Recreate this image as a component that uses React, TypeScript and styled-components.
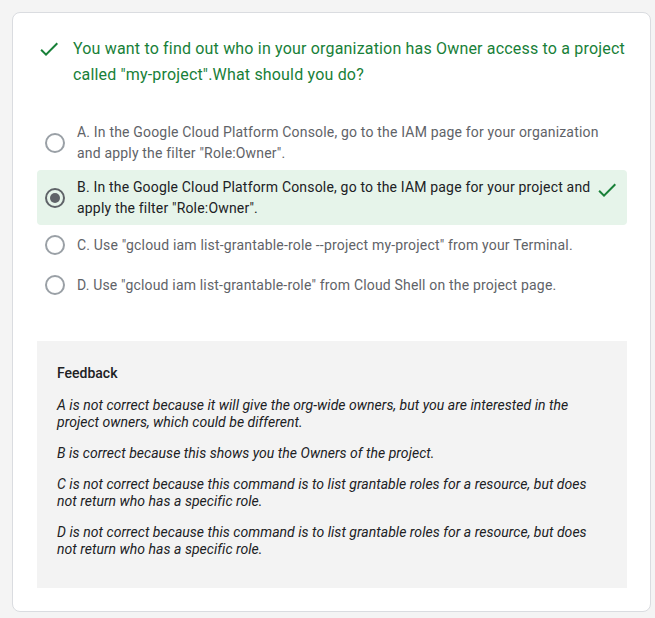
import React from "react";
import styled, { createGlobalStyle } from "styled-components";

const GlobalStyle = createGlobalStyle`
  html, body {
    margin: 0;
    padding: 0;
    background: #f4f4f4;
    font-family: Roboto, "Liberation Sans", Arial, sans-serif;
  }
  * { box-sizing: border-box; }
`;

const Page = styled.div`
  padding: 12px 4px 7px 12px;
`;

const Card = styled.div`
  background: #ffffff;
  border: 1px solid #dadce0;
  border-radius: 8px;
  padding: 23px 23px 23px 24px;
`;

const Question = styled.div`
  display: flex;
  align-items: flex-start;
  gap: 12px;
  color: #188038;
  font-size: 16px;
  line-height: 26px;
  letter-spacing: 0.18px;
  margin-bottom: 27px;
`;

const QIcon = styled.svg`
  flex: none;
  width: 24px;
  height: 24px;
  margin-top: 1px;
  fill: #188038;
`;

const Options = styled.div`
  display: flex;
  flex-direction: column;
  margin-bottom: 36px;
`;

const OptionRow = styled.div<{ $correct?: boolean }>`
  display: flex;
  align-items: center;
  gap: 12px;
  min-height: 40px;
  padding: 6.5px 8px 6.5px 8px;
  border-radius: 4px;
  background: ${(p) => (p.$correct ? "#e6f4ea" : "transparent")};
`;

const Radio = styled.span<{ $checked?: boolean }>`
  flex: none;
  width: 20px;
  height: 20px;
  border-radius: 50%;
  border: 2px solid ${(p) => (p.$checked ? "#5f6368" : "#9aa0a6")};
  display: flex;
  align-items: center;
  justify-content: center;
  &::after {
    content: "";
    width: 10px;
    height: 10px;
    border-radius: 50%;
    background: #5f6368;
    display: ${(p) => (p.$checked ? "block" : "none")};
  }
`;

const OptionText = styled.span<{ $correct?: boolean }>`
  flex: 1;
  font-size: 14px;
  line-height: 21px;
  letter-spacing: 0.18px;
  color: ${(p) => (p.$correct ? "#202124" : "#5f6368")};
`;

const RowCheck = styled.svg`
  flex: none;
  align-self: flex-start;
  width: 24px;
  height: 24px;
  margin-top: 1px;
  margin-left: -11px;
  fill: #188038;
`;

const Feedback = styled.div`
  background: #f3f3f3;
  padding: 22px 20px 30px 20px;
  color: #202124;
`;

const FeedbackTitle = styled.div`
  font-size: 14px;
  font-weight: 500;
  line-height: 20px;
  margin-bottom: 14px;
`;

const FeedbackPara = styled.p`
  margin: 0 0 14px 0;
  font-size: 14px;
  line-height: 17px;
  letter-spacing: 0.03px;
  font-style: italic;
  &:last-child { margin-bottom: 0; }
`;

const CHECK_PATH = "M9 16.17L4.83 12l-1.42 1.41L9 19 21 7l-1.41-1.41z";

const options = [
  { label: 'A. In the Google Cloud Platform Console, go to the IAM page for your organization and apply the filter "Role:Owner".' },
  { label: 'B. In the Google Cloud Platform Console, go to the IAM page for your project and apply the filter "Role:Owner".', correct: true },
  { label: 'C. Use "gcloud iam list-grantable-role --project my-project" from your Terminal.' },
  { label: 'D. Use "gcloud iam list-grantable-role" from Cloud Shell on the project page.' },
];

const feedback = [
  "A is not correct because it will give the org-wide owners, but you are interested in the project owners, which could be different.",
  "B is correct because this shows you the Owners of the project.",
  "C is not correct because this command is to list grantable roles for a resource, but does not return who has a specific role.",
  "D is not correct because this command is to list grantable roles for a resource, but does not return who has a specific role.",
];

export default function App() {
  return (
    <>
      <GlobalStyle />
      <Page>
        <Card>
          <Question>
            <QIcon viewBox="0 0 24 24"><path d={CHECK_PATH} /></QIcon>
            <span>You want to find out who in your organization has Owner access to a project called "my-project".What should you do?</span>
          </Question>
          <Options>
            {options.map((o, i) => (
              <OptionRow key={i} $correct={o.correct}>
                <Radio $checked={o.correct} />
                <OptionText $correct={o.correct}>{o.label}</OptionText>
                {o.correct && (
                  <RowCheck viewBox="0 0 24 24"><path d={CHECK_PATH} /></RowCheck>
                )}
              </OptionRow>
            ))}
          </Options>
          <Feedback>
            <FeedbackTitle>Feedback</FeedbackTitle>
            {feedback.map((f, i) => (
              <FeedbackPara key={i}>{f}</FeedbackPara>
            ))}
          </Feedback>
        </Card>
      </Page>
    </>
  );
}
